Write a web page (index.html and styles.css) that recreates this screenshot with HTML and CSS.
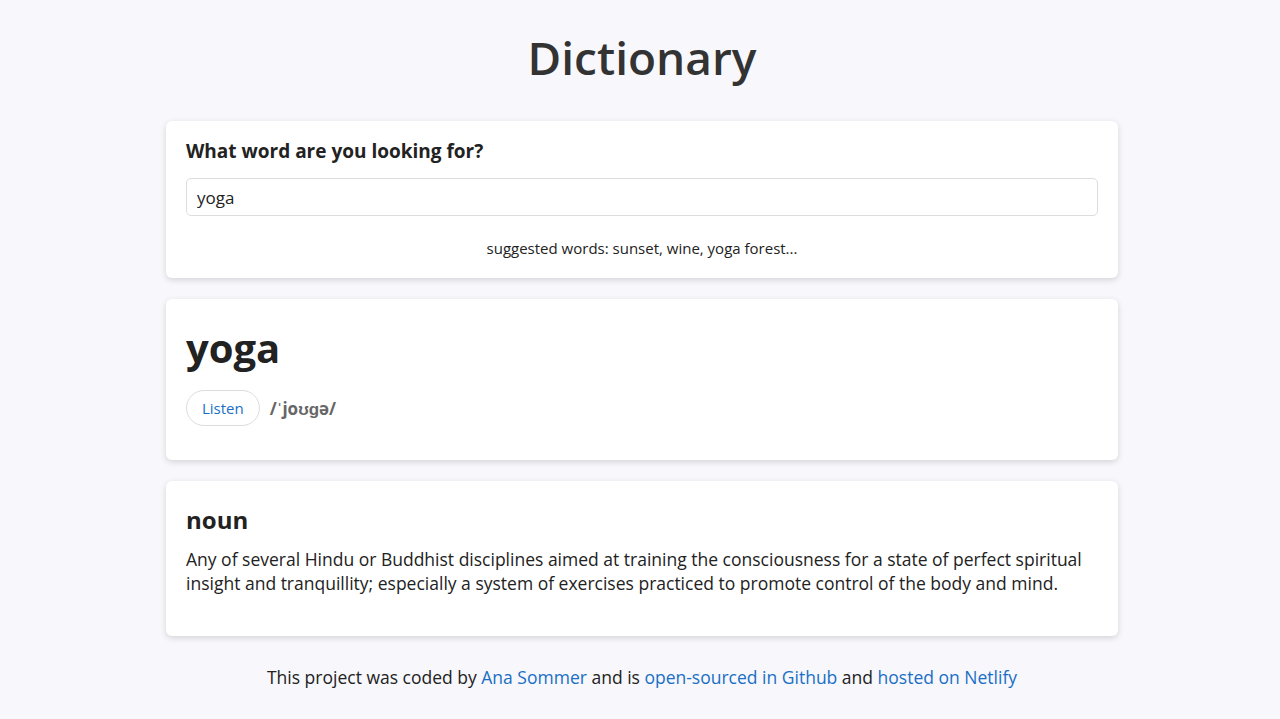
FILE: index.html
```html
<!DOCTYPE html>
<html lang="en">
<head>
    <meta charset="UTF-8">
    <meta name="viewport" content="width=device-width, initial-scale=1.0">
    <title>Dictionary</title>
    <link rel="stylesheet" href="styles.css">
</head>
<body>
    <div class="container">
        <h1>Dictionary</h1>
        <section class="card search">
            <h3>What word are you looking for?</h3>
            <form>
                <input type="search" class="search-input" value="yoga">
            </form>
            <div class="hint">suggested words: sunset, wine, yoga forest...</div>
        </section>
        <section class="card word">
            <h2>yoga</h2>
            <div class="phonetic">
                <a href="#" class="listen">Listen</a>
                <span class="phonetic-text">/ˈjoʊɡə/</span>
            </div>
        </section>
        <section class="card meaning">
            <h3>noun</h3>
            <p>Any of several Hindu or Buddhist disciplines aimed at training the consciousness for a state of perfect spiritual insight and tranquillity; especially a system of exercises practiced to promote control of the body and mind.</p>
        </section>
        <footer>
            This project was coded by <a href="#">Ana Sommer</a> and is <a href="#">open-sourced in Github</a> and <a href="#">hosted on Netlify</a>
        </footer>
    </div>
</body>
</html>
```

FILE: styles.css
```css
body {
    font-family: "Open Sans", Arial, sans-serif;
    background-color: #f7f7fc;
    color: #222;
    margin: 0;
}
.container {
    max-width: 952px;
    margin: 0 auto;
    padding: 34px 0 0 4px;
}
h1 {
    font-size: 46px;
    font-weight: 600;
    color: #333;
    text-align: center;
    margin: 0 0 41px;
    line-height: 46px;
}
.card {
    background: #fff;
    border-radius: 6px;
    padding: 20px;
    margin-bottom: 21px;
    box-shadow: 0 2px 6px rgba(0, 0, 0, 0.15);
}
.search {
    padding-top: 19px;
    padding-bottom: 20px;
}
.search h3 {
    font-size: 19px;
    font-weight: 700;
    margin: 0 0 16px;
    line-height: 22px;
}
.search-input {
    width: 100%;
    box-sizing: border-box;
    height: 38px;
    padding: 0 10px;
    font-family: inherit;
    font-size: 17px;
    color: #222;
    border: 1px solid #ddd;
    border-radius: 5px;
    outline: none;
}
.hint {
    text-align: center;
    font-size: 15px;
    margin-top: 22px;
    line-height: 20px;
}
.word {
    padding-top: 26px;
    padding-bottom: 34px;
}
.word h2 {
    font-size: 40px;
    font-weight: 700;
    margin: 0 0 19px;
    line-height: 46px;
}
.phonetic {
    display: flex;
    align-items: center;
    gap: 10px;
}
.listen {
    border: 1px solid #ddd;
    border-radius: 18px;
    padding: 7px 15px;
    font-size: 15px;
    color: #1a6fc4;
    text-decoration: none;
}
.phonetic-text {
    font-size: 17px;
    font-weight: 700;
    color: #666;
}
.meaning {
    padding-bottom: 41px;
}
.meaning h3 {
    font-size: 24px;
    font-weight: 700;
    margin: 4px 0 12px;
    line-height: 30px;
}
.meaning p {
    font-size: 17.5px;
    line-height: 24px;
    margin: 0;
}
footer {
    text-align: center;
    font-size: 17.5px;
    padding-top: 8px;
}
footer a {
    color: #1a6fc4;
    text-decoration: none;
}
```
